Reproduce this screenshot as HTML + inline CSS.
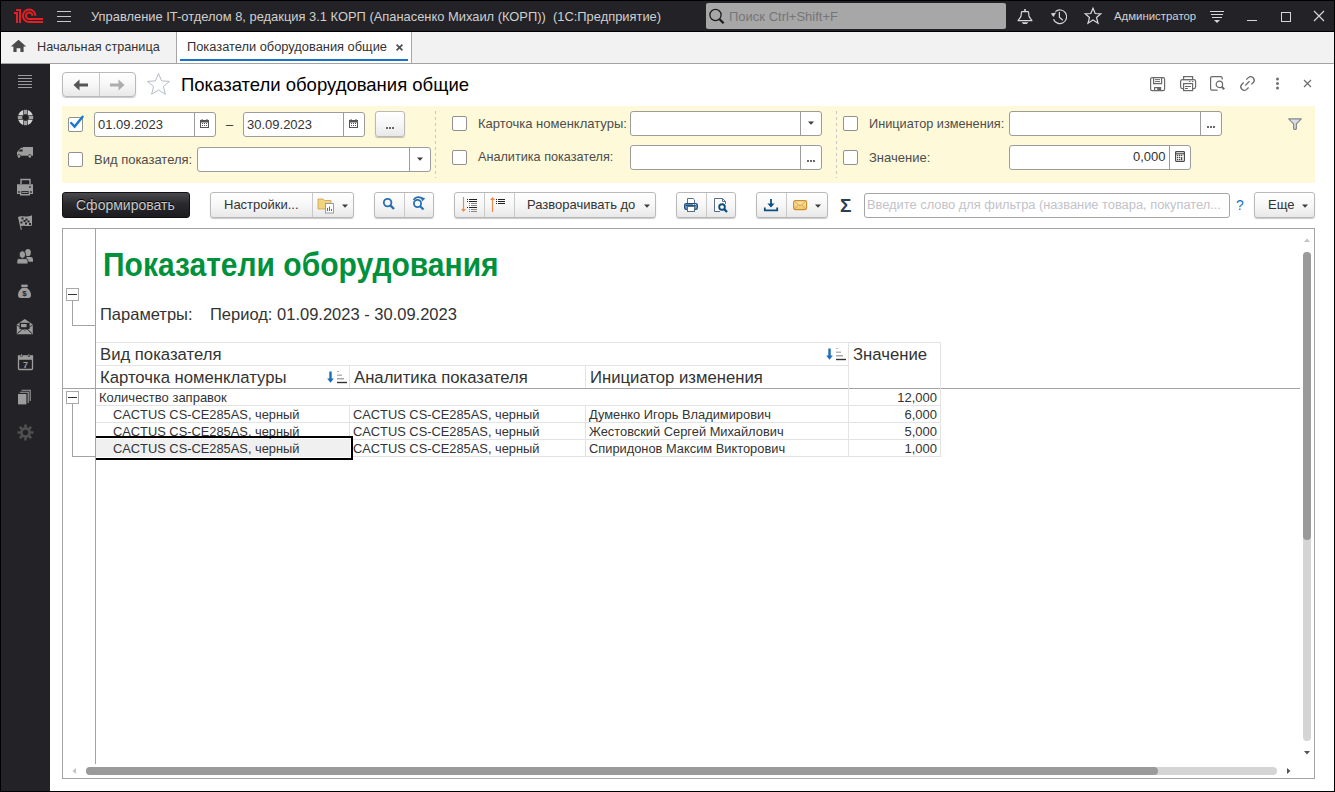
<!DOCTYPE html>
<html><head><meta charset="utf-8">
<style>
*{margin:0;padding:0;box-sizing:border-box}
html,body{width:1335px;height:792px;overflow:hidden;background:#000}
body{position:relative;font-family:"Liberation Sans",sans-serif;font-size:13px;color:#333}
.a{position:absolute}
.t{position:absolute;white-space:nowrap;line-height:1}
svg{position:absolute;overflow:visible}
.btn{position:absolute;border:1px solid #b9b9b9;border-radius:3px;background:linear-gradient(#fff,#f6f6f6 55%,#e8e8e8);box-shadow:0 1px 1px rgba(0,0,0,.22)}
.sep{position:absolute;top:0;bottom:0;width:1px;background:#c9c9c9}
.inp{position:absolute;background:#fff;border:1px solid #9c9c9c;border-radius:3px}
.isep{position:absolute;top:0;bottom:0;width:1px;background:#9c9c9c}
.cb{position:absolute;width:15px;height:15px;background:#fff;border:1px solid #919191;border-radius:2px}
.lbl{position:absolute;white-space:nowrap;line-height:1;color:#4d4d4d;font-size:13px}
.hl{position:absolute;height:1px;background:#e3e3e3}
.vl{position:absolute;width:1px;background:#e3e3e3}
</style></head><body>
<!-- ===== TOP BAR ===== -->
<div class="a" style="left:1px;top:1px;width:1333px;height:30px;background:#232327"></div>
<!-- 1C logo -->
<svg style="left:0;top:0" width="50" height="30" viewBox="0 0 50 30">
 <g fill="#e41f25"><rect x="14" y="12" width="4" height="2"/><rect x="16" y="12" width="2" height="11"/><rect x="16" y="9" width="5" height="2"/><rect x="19" y="9" width="2" height="14"/></g>
 <g fill="none" stroke="#e41f25" stroke-width="2">
  <path d="M35.4 15.8 A6.2 6.2 0 1 0 29.2 22 H43"/>
  <path d="M32.4 15.8 A3.2 3.2 0 1 0 29.2 19 H43"/>
 </g>
</svg>
<!-- hamburger -->
<div class="a" style="left:57px;top:11px;width:14px;height:1px;background:#c9c9c9"></div>
<div class="a" style="left:57px;top:16px;width:14px;height:1px;background:#c9c9c9"></div>
<div class="a" style="left:57px;top:21px;width:14px;height:1px;background:#c9c9c9"></div>
<div class="t" style="left:91px;top:11px;font-size:12.9px;color:#cfcfcf">Управление IT-отделом 8, редакция 3.1 КОРП (Апанасенко Михаил (КОРП))&nbsp; (1С:Предприятие)</div>
<!-- search -->
<div class="a" style="left:706px;top:3px;width:300px;height:26px;background:#a7a7a7;border-radius:2px"></div>
<svg style="left:706px;top:3px" width="30" height="26">
 <circle cx="9.5" cy="12" r="5.6" fill="none" stroke="#1c1c1c" stroke-width="1.3"/>
 <path d="M13.6 16.2 L17.6 20.2" stroke="#1c1c1c" stroke-width="2.2"/>
</svg>
<div class="t" style="left:729px;top:10px;font-size:13px;color:#767676">Поиск Ctrl+Shift+F</div>
<!-- bell -->
<svg style="left:1016px;top:7px" width="18" height="19" viewBox="0 0 18 19" fill="none" stroke="#d6d6d6" stroke-width="1.2">
 <circle cx="9" cy="3" r="1.1" fill="#d6d6d6" stroke="none"/>
 <path d="M5.8 4.6 H12.2 C12.9 5.6 12.7 7.6 13 9 C13.4 10.6 14.8 12 15.8 13.2 V13.7 H2.2 V13.2 C3.2 12 4.6 10.6 5 9 C5.3 7.6 5.1 5.6 5.8 4.6Z"/>
 <path d="M5.6 15.2 H12.4 L10.8 17 H7.2Z" fill="#d6d6d6" stroke="none"/>
</svg>
<!-- history -->
<svg style="left:1050px;top:7px" width="19" height="19" viewBox="0 0 19 19" fill="none" stroke="#d6d6d6" stroke-width="1.2">
 <path d="M5.4 4.6 A6.8 6.8 0 1 1 3.5 12.2"/>
 <path d="M0.8 6.4 L6.2 5.4 L3.4 10Z" fill="#d6d6d6" stroke="none"/>
 <path d="M9.4 5 V10.2 L12.8 13.2"/>
</svg>
<!-- star -->
<svg style="left:1084px;top:7px" width="18" height="18" viewBox="0 0 18 18" fill="none" stroke="#dcdcdc" stroke-width="1.2">
 <path d="M9 1.2 L11.2 6.5 L16.8 6.8 L12.5 10.5 L14 16.2 L9 13 L4 16.2 L5.5 10.5 L1.2 6.8 L6.8 6.5Z"/>
</svg>
<div class="t" style="left:1114px;top:11px;font-size:11.4px;color:#d2d2d2">Администратор</div>
<!-- menu icon -->
<div class="a" style="left:1210px;top:11px;width:14px;height:1px;background:#d6d6d6"></div>
<div class="a" style="left:1211px;top:14px;width:12px;height:1px;background:#d6d6d6"></div>
<div class="a" style="left:1212px;top:17px;width:10px;height:1px;background:#d6d6d6"></div>
<svg style="left:1210px;top:19px" width="14" height="6"><path d="M4 1 H10 L7 4Z" fill="#d6d6d6"/></svg>
<!-- window controls -->
<div class="a" style="left:1247px;top:20px;width:10px;height:1px;background:#d6d6d6"></div>
<div class="a" style="left:1281px;top:12px;width:10px;height:10px;border:1px solid #d6d6d6"></div>
<svg style="left:1313px;top:10px" width="12" height="12" viewBox="0 0 12 12"><path d="M1 1 L11 11 M11 1 L1 11" stroke="#d6d6d6" stroke-width="1.2"/></svg>

<!-- ===== TAB BAR ===== -->
<div class="a" style="left:1px;top:32px;width:1333px;height:31px;background:#f2f2f2"></div>
<div class="a" style="left:1px;top:63px;width:1333px;height:1px;background:#a3a3a3"></div>
<svg style="left:10px;top:39px" width="17" height="14" viewBox="0 0 17 14">
 <path d="M8.5 0.8 L16.2 7.6 H13.6 V13 H10.4 V9.2 H6.6 V13 H3.4 V7.6 H0.8Z" fill="#4a4a4a"/>
</svg>
<div class="t" style="left:37px;top:41px;font-size:12.7px;color:#333">Начальная страница</div>
<div class="a" style="left:176px;top:32px;width:1px;height:31px;background:#a6a6a6"></div>
<div class="a" style="left:177px;top:32px;width:234px;height:31px;background:#fff"></div>
<div class="a" style="left:411px;top:32px;width:1px;height:31px;background:#a6a6a6"></div>
<div class="t" style="left:187px;top:41px;font-size:12.85px;color:#333">Показатели оборудования общие</div>
<svg style="left:395px;top:43px" width="9" height="9" viewBox="0 0 9 9"><path d="M1.6 1.6 L7.4 7.4 M7.4 1.6 L1.6 7.4" stroke="#505050" stroke-width="1.7"/></svg>
<div class="a" style="left:180px;top:59px;width:228px;height:2px;background:#1a73c8"></div>

<!-- ===== SIDEBAR ===== -->
<div class="a" style="left:1px;top:64px;width:49px;height:727px;background:#232327"></div>
<div class="a" style="left:50px;top:64px;width:1284px;height:727px;background:#fff"></div>



<!-- sidebar icons -->
<svg style="left:18px;top:75px" width="14" height="13" viewBox="0 0 14 13"><path d="M0 .5h14M0 3.5h14M0 6.5h14M0 9.5h14M0 12.5h14" stroke="#9c9c9c" stroke-width="1"/></svg>
<svg style="left:17px;top:109px" width="18" height="18" viewBox="0 0 18 18">
 <circle cx="8.5" cy="8.5" r="5.2" fill="none" stroke="#d2d2d2" stroke-width="5"/>
 <g fill="#232327"><rect x="6.3" y="0" width="4.4" height="6"/><rect x="6.3" y="11" width="4.4" height="7"/><rect x="0" y="6.3" width="6" height="4.4"/><rect x="11" y="6.3" width="7" height="4.4"/></g>
 <g fill="#a2a2a2"><rect x="7" y="0.8" width="3" height="4.6"/><rect x="7" y="11.6" width="3" height="4.6"/><rect x="0.8" y="7" width="4.6" height="3"/><rect x="11.6" y="7" width="4.6" height="3"/></g>
 <circle cx="8.5" cy="8.5" r="2.9" fill="#232327"/>
</svg>
<svg style="left:16px;top:146px" width="18" height="13" viewBox="0 0 18 13">
 <path d="M1 6.2 L5 1.8 H7 V1 H17 V9.8 H15.4 A1.6 1.6 0 0 0 12.2 9.8 H4.6 A1.6 1.6 0 0 0 1.4 9.8 H1Z" fill="#9c9c9c"/>
 <path d="M4.2 3.6 H6.6 V5.4 H2.6Z" fill="#232327"/>
 <circle cx="3" cy="10.4" r="1.3" fill="#9c9c9c"/><circle cx="13.8" cy="10.4" r="1.3" fill="#9c9c9c"/>
</svg>
<svg style="left:17px;top:179px" width="17" height="17" viewBox="0 0 17 17">
 <path d="M4 5 V0.5 H13 V5" fill="none" stroke="#9c9c9c" stroke-width="1.4"/>
 <path d="M0 5.2 H16 V15 H13 V12 H3 V15 H0Z" fill="#9c9c9c"/>
 <rect x="12.2" y="7.2" width="1.6" height="1.6" fill="#232327"/><rect x="1.2" y="12.2" width="1.6" height="1.6" fill="#232327"/><rect x="13.2" y="12.2" width="1.6" height="1.6" fill="#232327"/>
 <path d="M3.7 11.5 V15.7 H12.3 V11.5" fill="none" stroke="#9c9c9c" stroke-width="1.4"/><path d="M5.2 13.4 H10.8" stroke="#9c9c9c" stroke-width="1"/>
</svg>
<svg style="left:17px;top:214px" width="17" height="17" viewBox="0 0 17 17">
 <path d="M1 3 C4 1 8 4 15 1.2 V11.5 C10 13 6 10.5 3.8 12.4 L5 15.6 L3.8 15.8 Z" fill="#9c9c9c"/>
 <path d="M4.5 3.5h2v2h-2z M8.5 4.5h2v2h-2z M6.5 6h2v2h-2z M10.5 6.5h2v2h-2z M3.5 7.5h2v2h-2z M8 8.5h2v2h-2z M12 9h2v2h-2z" fill="#232327"/>
</svg>
<svg style="left:16px;top:248px" width="18" height="17" viewBox="0 0 18 17">
 <ellipse cx="12" cy="4.6" rx="2.9" ry="3.7" fill="#9c9c9c"/>
 <path d="M10.4 9 H15 Q17 9.4 17 11.4 V13.8 H10.4Z" fill="#9c9c9c"/>
 <path d="M2.6 10.6 Q0.9 11 0.9 12.8 V16 H12 V12.8 Q12 11 10.2 10.6Z" fill="#9c9c9c" stroke="#232327" stroke-width="0.9"/>
 <ellipse cx="6.4" cy="6.6" rx="3.2" ry="3.8" fill="#9c9c9c" stroke="#232327" stroke-width="0.9"/>
</svg>
<svg style="left:18px;top:284px" width="14" height="15" viewBox="0 0 14 15">
 <rect x="3.3" y="0.6" width="6.4" height="2.4" fill="#9c9c9c"/>
 <path d="M4.2 3.8 H8.8 C11 5.5 13 8 13 11 C13 13.2 12 14 10.5 14 H2.5 C1 14 0 13.2 0 11 C0 8 2 5.5 4.2 3.8Z" fill="#9c9c9c"/>
 <text x="6.5" y="12" font-family="Liberation Sans" font-weight="bold" font-size="8" fill="#232327" text-anchor="middle">$</text>
</svg>
<svg style="left:16px;top:318px" width="18" height="18" viewBox="0 0 18 18">
 <path d="M0.8 6.5 L8.8 1 L16.8 6.5 V16.2 H0.8Z" fill="#9c9c9c"/>
 <rect x="3.6" y="4.8" width="10" height="6.2" fill="#232327"/>
 <rect x="5" y="6" width="5.6" height="3.2" fill="#9c9c9c"/>
 <path d="M1.5 15.5 L7 10.5 M16 15.5 L10.5 10.5" stroke="#232327" stroke-width="1"/>
 <path d="M1 7 L8.8 12.2 L16.6 7" fill="none" stroke="#232327" stroke-width="0.8"/>
</svg>
<svg style="left:17px;top:354px" width="17" height="17" viewBox="0 0 17 17">
 <path d="M1.5 1.8 H15.5 V14.5 A1 1 0 0 1 14.5 15.5 H2.5 A1 1 0 0 1 1.5 14.5Z" fill="none" stroke="#9c9c9c" stroke-width="1.3"/>
 <rect x="1.5" y="1.8" width="14" height="4" fill="#9c9c9c"/>
 <path d="M4.5 0 V3 M11.8 0 V3" stroke="#232327" stroke-width="1.8"/><path d="M4.5 0.2 V2.6 M11.8 0.2 V2.6" stroke="#9c9c9c" stroke-width="0.9"/>
 <text x="8.4" y="13.6" font-family="Liberation Sans" font-weight="bold" font-size="9" fill="#9c9c9c" text-anchor="middle">7</text>
</svg>
<svg style="left:18px;top:389px" width="14" height="16" viewBox="0 0 14 16">
 <path d="M3.6 1.2 H12.2 V12" fill="none" stroke="#9c9c9c" stroke-width="1.1"/>
 <path d="M1.8 3.2 H10.2 V14" fill="none" stroke="#9c9c9c" stroke-width="1.1"/>
 <rect x="0" y="5" width="8.4" height="10.4" fill="#9c9c9c"/>
</svg>
<svg style="left:17px;top:424px" width="17" height="17" viewBox="0 0 17 17">
 <g fill="#505050">
 <circle cx="8.5" cy="8.5" r="5.4"/>
 <path d="M7.2 0.5h2.6v3h-2.6z M7.2 13.5h2.6v3h-2.6z M0.5 7.2v2.6h3v-2.6z M13.5 7.2v2.6h3v-2.6z"/>
 <path d="M7.2 0.5h2.6v3h-2.6z M7.2 13.5h2.6v3h-2.6z M0.5 7.2v2.6h3v-2.6z M13.5 7.2v2.6h3v-2.6z" transform="rotate(45 8.5 8.5)"/>
 </g>
 <circle cx="8.5" cy="8.5" r="2.8" fill="#232327"/>
</svg>

<!-- ===== FORM HEADER ===== -->
<div class="btn" style="left:62px;top:72px;width:74px;height:25px;border-radius:4px"><div class="sep" style="left:36px"></div></div>
<svg style="left:72px;top:78px" width="18" height="14" viewBox="0 0 18 14"><path d="M1.5 7 L7.5 1.5 V5.5 H16 V8.5 H7.5 V12.5Z" fill="#555"/></svg>
<svg style="left:108px;top:78px" width="18" height="14" viewBox="0 0 18 14"><path d="M16.5 7 L10.5 1.5 V5.5 H2 V8.5 H10.5 V12.5Z" fill="#adadad"/></svg>
<svg style="left:146px;top:72px" width="26" height="24" viewBox="0 0 26 24"><path d="M12.5 1.5 L15.6 8.9 L23.5 9.4 L17.4 14.5 L19.4 22.3 L12.5 18 L5.6 22.3 L7.6 14.5 L1.5 9.4 L9.4 8.9Z" fill="none" stroke="#b4bcc4" stroke-width="1"/></svg>
<div class="t" style="left:181px;top:75.5px;font-size:18.5px;color:#000">Показатели оборудования общие</div>
<!-- right icons -->
<svg style="left:1150px;top:77px" width="16" height="15" viewBox="0 0 16 15" fill="none" stroke="#6a6a6a" stroke-width="1.2">
 <rect x="0.6" y="0.6" width="14" height="13" rx="1.6"/><path d="M3.6 0.6 V6.6 H11.6 V0.6"/><path d="M5 2.6 H10 M5 4.6 H10" stroke-width="1"/><path d="M4.6 13.6 V10.6 H10.6 V13.6"/><rect x="7.2" y="11" width="3" height="2.4" fill="#6a6a6a" stroke="none"/>
</svg>
<svg style="left:1180px;top:76px" width="17" height="16" viewBox="0 0 17 16" fill="none" stroke="#6a6a6a" stroke-width="1.2">
 <rect x="3.6" y="0.6" width="9" height="3"/><path d="M3.6 12.6 H2.4 Q0.6 12.6 0.6 10.8 V5.4 Q0.6 3.6 2.4 3.6 H13.8 Q15.6 3.6 15.6 5.4 V10.8 Q15.6 12.6 13.8 12.6 H12.6"/><rect x="3.6" y="7.6" width="9" height="7" fill="#fff"/><path d="M5 10.5 H11 M5 12.5 H8 M9 5.6 H10.5 M12 5.6 H13.5" stroke-width="1"/>
</svg>
<svg style="left:1210px;top:76px" width="16" height="16" viewBox="0 0 16 16" fill="none" stroke="#6a6a6a" stroke-width="1.2">
 <path d="M12.2 3.6 V1.9 Q12.2 0.6 10.9 0.6 H1.9 Q0.6 0.6 0.6 1.9 V12.8 Q0.6 14.1 1.9 14.1 H7.6"/><circle cx="9.4" cy="8.4" r="3.2"/><path d="M11.8 10.8 L14.2 13.2" stroke-width="2"/>
</svg>
<svg style="left:1239px;top:75px" width="17" height="17" viewBox="0 0 17 17" fill="none" stroke="#6a6a6a" stroke-width="1.3">
 <path d="M7.3 4.6 L9.33 2.63 A3.5 3.5 0 0 1 14.27 7.57 L12.4 9.4"/><path d="M4.63 7.53 L2.73 9.43 A3.5 3.5 0 0 0 7.67 14.37 L9.57 12.47"/><path d="M6.2 10.6 L10.5 6.3"/>
</svg>
<svg style="left:1275px;top:77px" width="5" height="13"><circle cx="2.5" cy="2" r="1.5" fill="#6e6e6e"/><circle cx="2.5" cy="6.5" r="1.5" fill="#6e6e6e"/><circle cx="2.5" cy="11" r="1.5" fill="#6e6e6e"/></svg>
<svg style="left:1303px;top:79px" width="9" height="9" viewBox="0 0 9 9"><path d="M1 1 L8 8 M8 1 L1 8" stroke="#6e6e6e" stroke-width="1.2"/></svg>

<!-- ===== FILTER PANEL ===== -->
<div class="a" style="left:62px;top:106px;width:1253px;height:77px;background:#fef9d8"></div>
<div class="cb" style="left:68px;top:117px"></div>
<svg style="left:68px;top:113px" width="18" height="18" viewBox="0 0 18 18"><path d="M3.2 10 L6.6 13.6 L14.6 3.8" fill="none" stroke="#1a76cf" stroke-width="2.4" stroke-linecap="round"/></svg>
<div class="inp" style="left:94px;top:112px;width:122px;height:25px"><div class="isep" style="left:99px"></div></div>
<div class="t" style="left:98px;top:118px;font-size:13px;color:#333">01.09.2023</div>
<svg style="left:199px;top:118px" width="12" height="12" viewBox="0 0 12 12"><rect x="1" y="2" width="9" height="8" fill="#555"/><rect x="2" y="4.5" width="7" height="4.5" fill="#fff"/><path d="M3 1v2 M8 1v2" stroke="#555"/><path d="M3 5.5h1 M5 5.5h1 M7 5.5h1 M3 7.5h1 M5 7.5h1 M7 7.5h1" stroke="#555"/></svg>
<div class="t" style="left:226px;top:118px;font-size:13px;color:#333">–</div>
<div class="inp" style="left:243px;top:112px;width:122px;height:25px"><div class="isep" style="left:99px"></div></div>
<div class="t" style="left:247px;top:118px;font-size:13px;color:#333">30.09.2023</div>
<svg style="left:348px;top:118px" width="12" height="12" viewBox="0 0 12 12"><rect x="1" y="2" width="9" height="8" fill="#555"/><rect x="2" y="4.5" width="7" height="4.5" fill="#fff"/><path d="M3 1v2 M8 1v2" stroke="#555"/><path d="M3 5.5h1 M5 5.5h1 M7 5.5h1 M3 7.5h1 M5 7.5h1 M7 7.5h1" stroke="#555"/></svg>
<div class="btn" style="left:375px;top:111px;width:30px;height:26px"></div>
<svg style="left:384px;top:126px" width="10" height="4"><rect x="2" y="1" width="2" height="2" fill="#6a6a6a"/><rect x="5" y="1" width="2" height="2" fill="#6a6a6a"/><rect x="8" y="1" width="2" height="2" fill="#6a6a6a"/></svg>
<div class="cb" style="left:68px;top:152px"></div>
<div class="lbl" style="left:94px;top:153px">Вид показателя:</div>
<div class="inp" style="left:197px;top:147px;width:234px;height:25px"><div class="isep" style="left:211px"></div></div>
<svg style="left:416px;top:157px" width="8" height="5"><path d="M1 0.6 H7 L4 3.8Z" fill="#3c3c3c"/></svg>
<div class="a" style="left:435px;top:111px;width:1px;height:67px;background:repeating-linear-gradient(#c8c8c8 0 3px,transparent 3px 6px)"></div>

<div class="cb" style="left:452px;top:116px"></div>
<div class="lbl" style="left:478px;top:117px">Карточка номенклатуры:</div>
<div class="inp" style="left:630px;top:111px;width:192px;height:25px"><div class="isep" style="left:169px"></div></div>
<svg style="left:807px;top:121px" width="8" height="5"><path d="M1 0.6 H7 L4 3.8Z" fill="#3c3c3c"/></svg>
<div class="cb" style="left:452px;top:150px"></div>
<div class="lbl" style="left:478px;top:151px;font-size:12.66px">Аналитика показателя:</div>
<div class="inp" style="left:630px;top:145px;width:192px;height:25px"><div class="isep" style="left:169px"></div></div>
<svg style="left:805px;top:159px" width="10" height="4"><rect x="2" y="1" width="2" height="2" fill="#6a6a6a"/><rect x="5" y="1" width="2" height="2" fill="#6a6a6a"/><rect x="8" y="1" width="2" height="2" fill="#6a6a6a"/></svg>
<div class="a" style="left:836px;top:111px;width:1px;height:67px;background:repeating-linear-gradient(#c8c8c8 0 3px,transparent 3px 6px)"></div>

<div class="cb" style="left:843px;top:116px"></div>
<div class="lbl" style="left:869px;top:118px;font-size:12.72px">Инициатор изменения:</div>
<div class="inp" style="left:1009px;top:111px;width:213px;height:25px"><div class="isep" style="left:190px"></div></div>
<svg style="left:1205px;top:125px" width="10" height="4"><rect x="2" y="1" width="2" height="2" fill="#6a6a6a"/><rect x="5" y="1" width="2" height="2" fill="#6a6a6a"/><rect x="8" y="1" width="2" height="2" fill="#6a6a6a"/></svg>
<div class="cb" style="left:843px;top:150px"></div>
<div class="lbl" style="left:869px;top:151px">Значение:</div>
<div class="inp" style="left:1009px;top:145px;width:182px;height:25px"><div class="isep" style="left:159px"></div></div>
<div class="t" style="left:1133px;top:150px;font-size:13px;color:#333">0,000</div>
<svg style="left:1175px;top:151px" width="10" height="11" viewBox="0 0 10 11"><rect x="0.6" y="0.6" width="8.8" height="9.8" rx="0.8" fill="none" stroke="#4a4a4a" stroke-width="1.2"/><path d="M0.6 2.8 H9.4" stroke="#4a4a4a" stroke-width="1.2"/><g fill="#4a4a4a"><circle cx="2.6" cy="4.6" r=".75"/><circle cx="4.6" cy="4.6" r=".75"/><circle cx="6.6" cy="4.6" r=".75"/><circle cx="2.6" cy="6.6" r=".75"/><circle cx="4.6" cy="6.6" r=".75"/><circle cx="2.6" cy="8.6" r=".75"/><circle cx="4.6" cy="8.6" r=".75"/><rect x="5.9" y="5.9" width="1.4" height="3.4" rx=".6"/></g></svg>
<svg style="left:1288px;top:118px" width="14" height="12" viewBox="0 0 14 12"><defs><linearGradient id="fg" x1="0" y1="0" x2="1" y2="1"><stop offset="0" stop-color="#e6e9ee"/><stop offset="1" stop-color="#c4cad2"/></linearGradient></defs><path d="M0.7 0.9 H13.3 L8.4 5.8 V10.6 Q8.4 11.4 7.6 11.4 H6.4 Q5.6 11.4 5.6 10.6 V5.8Z" fill="url(#fg)" stroke="#7d868d" stroke-width="1.1" stroke-linejoin="round"/></svg>

<!-- ===== TOOLBAR ===== -->
<div class="a" style="left:62px;top:192px;width:128px;height:26px;border-radius:3px;background:linear-gradient(#4a4a4e,#2a2a2e 45%,#1c1c20);border:1px solid #111"></div>
<div class="t" style="left:76px;top:198px;font-size:14px;color:#c8c8c8;text-shadow:0 -1px 0 #000">Сформировать</div>

<div class="btn" style="left:210px;top:192px;width:144px;height:26px"><div class="sep" style="left:101px"></div></div>
<div class="t" style="left:224px;top:198px;font-size:13px;color:#333">Настройки...</div>
<svg style="left:317px;top:196px" width="20" height="18" viewBox="0 0 20 18">
 <path d="M1 3 H6 L7.5 4.5 H14 V13 H1Z" fill="#f2d37e" stroke="#c8a24a" stroke-width=".8"/>
 <rect x="8.5" y="7.5" width="8" height="9.5" fill="#fff" stroke="#8a96a4" stroke-width=".9"/>
 <path d="M10.5 15 v-3 M12.5 15 v-4.5 M14.5 15 v-2" stroke="#d34" stroke-width="1"/>
</svg>
<svg style="left:341px;top:204px" width="8" height="5"><path d="M1 0.6 H7 L4 3.8Z" fill="#3c3c3c"/></svg>

<div class="btn" style="left:374px;top:192px;width:60px;height:26px"><div class="sep" style="left:29px"></div></div>
<svg style="left:382px;top:197px" width="14" height="14" viewBox="0 0 14 14"><circle cx="5.6" cy="5.6" r="3.8" fill="none" stroke="#2a6fb0" stroke-width="1.8"/><path d="M8.4 8.4 L12 12" stroke="#2a6fb0" stroke-width="2.4"/></svg>
<svg style="left:411px;top:196px" width="16" height="15" viewBox="0 0 16 15"><circle cx="6.5" cy="7.5" r="3.6" fill="none" stroke="#2a6fb0" stroke-width="1.8"/><path d="M9.2 10.2 L12.5 13.5" stroke="#2a6fb0" stroke-width="2.2"/><path d="M2.5 4 A5.5 5.5 0 0 1 11.5 3" fill="none" stroke="#2a6fb0" stroke-width="1.6"/><path d="M10 0.8 L14.2 2.6 L11 5.6Z" fill="#2a6fb0"/></svg>

<div class="btn" style="left:454px;top:192px;width:202px;height:26px"><div class="sep" style="left:29px"></div><div class="sep" style="left:59px"></div></div>
<svg style="left:450px;top:190px" width="60" height="30" viewBox="0 0 60 30">
 <path d="M13.5 7 V19.5" stroke="#f08a4b" stroke-width="1.2"/><path d="M11 19 H16 L13.5 22Z" fill="#f08a4b"/>
 <g stroke-width="1">
 <path d="M19 9.5h8 M19 11.5h8 M19 17.5h8" stroke="#222"/>
 <path d="M17 9.5h1 M17 11.5h1 M17 17.5h1" stroke="#222"/>
 <path d="M21 13.5h6 M21 15.5h6 M21 19.5h6 M21 21.5h6 M19 13.5h1 M19 15.5h1 M19 19.5h1 M19 21.5h1" stroke="#888"/>
 </g>
 <path d="M42.5 9.5 V22" stroke="#f08a4b" stroke-width="1.2"/><path d="M40 10 H45 L42.5 7Z" fill="#f08a4b"/>
 <path d="M48 9.5h7 M48 11.5h7 M48 13.5h7 M46 9.5h1 M46 11.5h1 M46 13.5h1" stroke="#222" stroke-width="1"/>
</svg>
<div class="t" style="left:527px;top:198px;font-size:13px;color:#333">Разворачивать до</div>
<svg style="left:643px;top:204px" width="8" height="5"><path d="M1 0.6 H7 L4 3.8Z" fill="#3c3c3c"/></svg>

<div class="btn" style="left:676px;top:192px;width:60px;height:26px"><div class="sep" style="left:29px"></div></div>
<svg style="left:683px;top:197px" width="16" height="16" viewBox="0 0 16 16">
 <path d="M4.5 6.5 V1.5 H10.2 L11.5 2.8 V6.5" fill="#fff" stroke="#5a6f84" stroke-width="1"/>
 <rect x="1.6" y="6.6" width="12.8" height="5.8" rx="1.6" fill="#6f9dcc" stroke="#1e4d7b" stroke-width="1.2"/>
 <path d="M3 8.5 H13" stroke="#1e4d7b" stroke-width="1"/>
 <circle cx="10.4" cy="7.6" r=".6" fill="#fff"/><circle cx="12.4" cy="7.6" r=".6" fill="#fff"/>
 <rect x="4.5" y="9.5" width="7" height="5" fill="#fff" stroke="#5a6f84" stroke-width="1"/>
</svg>
<svg style="left:713px;top:197px" width="17" height="17" viewBox="0 0 17 17">
 <path d="M7 14.5 H1.5 V1.5 H9.5 L12.5 4.5 V7" fill="#fbfbfb" stroke="#5a6f84" stroke-width="1"/>
 <path d="M9.5 1.5 V4.5 H12.5" fill="none" stroke="#5a6f84" stroke-width="1"/>
 <circle cx="9" cy="10" r="2.8" fill="#fff" stroke="#0b4f80" stroke-width="1.9"/>
 <path d="M11 12 L14 15" stroke="#0b4f80" stroke-width="2.4"/>
</svg>

<div class="btn" style="left:756px;top:192px;width:72px;height:26px"><div class="sep" style="left:29px"></div></div>
<svg style="left:763px;top:198px" width="16" height="15" viewBox="0 0 16 15"><path d="M8 1 V8.5" stroke="#0d4f82" stroke-width="1.8"/><path d="M4.4 5.6 H11.6 L8 9.6Z" fill="#0d4f82"/><path d="M1.8 9.4 V12.4 H14.2 V9.4" fill="none" stroke="#0d4f82" stroke-width="1.8"/></svg>
<svg style="left:793px;top:200px" width="15" height="11" viewBox="0 0 15 11"><defs><linearGradient id="eg" x1="0" y1="0" x2="0" y2="1"><stop offset="0" stop-color="#fbe7b0"/><stop offset="1" stop-color="#f1c46a"/></linearGradient></defs><rect x="0.6" y="0.6" width="13" height="9" rx="1.6" fill="url(#eg)" stroke="#c98f2c" stroke-width="1.1"/><path d="M1.5 1.5 L7.1 6 L12.7 1.5 M1.6 9 L5.4 5 M12.6 9 L8.8 5" fill="none" stroke="#d6a246" stroke-width=".9"/></svg>
<svg style="left:814px;top:204px" width="8" height="5"><path d="M1 0.6 H7 L4 3.8Z" fill="#3c3c3c"/></svg>

<div class="t" style="left:840px;top:196px;font-size:19px;font-weight:bold;color:#2b3e50">Σ</div>
<div class="inp" style="left:864px;top:193px;width:366px;height:25px;border-color:#a5a5a5"></div>
<div class="t" style="left:867px;top:199px;font-size:12.85px;color:#c2c2ca">Введите слово для фильтра (название товара, покупател...</div>
<div class="t" style="left:1236px;top:198px;font-size:14px;color:#1a73c0">?</div>
<div class="btn" style="left:1254px;top:192px;width:61px;height:26px"></div>
<div class="t" style="left:1268px;top:198px;font-size:13px;color:#333">Еще</div>
<svg style="left:1301px;top:204px" width="8" height="5"><path d="M1 0.6 H7 L4 3.8Z" fill="#3c3c3c"/></svg>

<!-- ===== REPORT ===== -->
<div class="a" style="left:62px;top:228px;width:1253px;height:551px;border:1px solid #a3a3a3;background:#fff"></div>
<div class="a" style="left:95px;top:229px;width:1px;height:535px;background:#a3a3a3"></div>

<div class="t" style="left:103px;top:249px;font-size:30px;font-weight:bold;color:#00913c;transform:scaleY(1.1);transform-origin:0 5px">Показатели оборудования</div>
<div class="a" style="left:66px;top:288px;width:13px;height:13px;border:1px solid #a8a8a8;background:#fff"></div>
<div class="a" style="left:68px;top:294px;width:9px;height:1px;background:#333"></div>
<div class="a" style="left:72px;top:301px;width:1px;height:25px;background:#a3a3a3"></div>
<div class="a" style="left:72px;top:325px;width:23px;height:1px;background:#a3a3a3"></div>
<div class="t" style="left:100px;top:306px;font-size:16.5px;color:#333">Параметры:</div>
<div class="t" style="left:210px;top:306px;font-size:16.5px;color:#333">Период: 01.09.2023 - 30.09.2023</div>

<div class="hl" style="left:96px;top:342px;width:845px"></div>
<div class="hl" style="left:96px;top:365px;width:752px"></div>
<div class="a" style="left:63px;top:388px;width:1237px;height:1px;background:#a3a3a3"></div>
<div class="vl" style="left:848px;top:342px;height:114px"></div>
<div class="vl" style="left:940px;top:342px;height:114px"></div>
<div class="vl" style="left:349px;top:365px;height:23px"></div>
<div class="vl" style="left:585px;top:365px;height:23px"></div>
<div class="vl" style="left:349px;top:405px;height:51px"></div>
<div class="vl" style="left:585px;top:405px;height:51px"></div>
<div class="t" style="left:100px;top:347px;font-size:16.7px;color:#333">Вид показателя</div>
<svg style="left:826px;top:347px" width="22" height="14" viewBox="0 0 22 14"><path d="M3.5 1.5 V9" stroke="#1a6eb5" stroke-width="2.4"/><path d="M0.2 8.6 H6.8 L3.5 12.8Z" fill="#1a6eb5"/><path d="M10 1.5h2" stroke="#bbb" stroke-width="1"/><path d="M10 5.2h5" stroke="#aaa" stroke-width="1.3"/><path d="M10 8.8h7" stroke="#999" stroke-width="1.3"/><path d="M10 12.5h10" stroke="#333" stroke-width="1.4"/></svg>
<div class="t" style="left:853px;top:347px;font-size:16.7px;color:#333">Значение</div>
<div class="t" style="left:100px;top:370px;font-size:16.7px;color:#333">Карточка номенклатуры</div>
<svg style="left:327px;top:370px" width="22" height="14" viewBox="0 0 22 14"><path d="M3.5 1.5 V9" stroke="#1a6eb5" stroke-width="2.4"/><path d="M0.2 8.6 H6.8 L3.5 12.8Z" fill="#1a6eb5"/><path d="M10 1.5h2" stroke="#bbb" stroke-width="1"/><path d="M10 5.2h5" stroke="#aaa" stroke-width="1.3"/><path d="M10 8.8h7" stroke="#999" stroke-width="1.3"/><path d="M10 12.5h10" stroke="#333" stroke-width="1.4"/></svg>
<div class="t" style="left:354px;top:370px;font-size:16.7px;color:#333">Аналитика показателя</div>
<div class="t" style="left:590px;top:370px;font-size:16.7px;color:#333">Инициатор изменения</div>

<div class="hl" style="left:96px;top:405px;width:845px"></div>
<div class="hl" style="left:96px;top:422px;width:845px"></div>
<div class="hl" style="left:96px;top:439px;width:845px"></div>
<div class="hl" style="left:96px;top:456px;width:845px"></div>
<div class="a" style="left:66px;top:391px;width:13px;height:13px;border:1px solid #a8a8a8;background:#fff"></div>
<div class="a" style="left:68px;top:397px;width:9px;height:1px;background:#333"></div>
<div class="a" style="left:72px;top:404px;width:1px;height:53px;background:#a3a3a3"></div>
<div class="a" style="left:72px;top:456px;width:23px;height:1px;background:#a3a3a3"></div>
<div class="a" style="left:96px;top:439px;width:254px;height:18px;background:#f0f0f0"></div>

<div class="t" style="left:99px;top:391px;font-size:13px;color:#333">Количество заправок</div>
<div class="t" style="left:840px;top:391px;width:97px;text-align:right;font-size:13px;color:#333">12,000</div>
<div class="t" style="left:113px;top:409px;font-size:12.85px;color:#333">CACTUS CS-CE285AS, черный</div>
<div class="t" style="left:353px;top:409px;font-size:12.85px;color:#333">CACTUS CS-CE285AS, черный</div>
<div class="t" style="left:589px;top:409px;font-size:12.85px;color:#333">Думенко Игорь Владимирович</div>
<div class="t" style="left:840px;top:408px;width:97px;text-align:right;font-size:13px;color:#333">6,000</div>
<div class="t" style="left:113px;top:426px;font-size:12.85px;color:#333">CACTUS CS-CE285AS, черный</div>
<div class="t" style="left:353px;top:426px;font-size:12.85px;color:#333">CACTUS CS-CE285AS, черный</div>
<div class="t" style="left:589px;top:426px;font-size:12.85px;color:#333">Жестовский Сергей Михайлович</div>
<div class="t" style="left:840px;top:425px;width:97px;text-align:right;font-size:13px;color:#333">5,000</div>
<div class="a" style="left:96px;top:436px;width:257px;height:24px;border:2px solid #000;border-left:0"></div>
<div class="t" style="left:113px;top:443px;font-size:12.85px;color:#333">CACTUS CS-CE285AS, черный</div>
<div class="t" style="left:353px;top:443px;font-size:12.85px;color:#333">CACTUS CS-CE285AS, черный</div>
<div class="t" style="left:589px;top:443px;font-size:12.85px;color:#333">Спиридонов Максим Викторович</div>
<div class="t" style="left:840px;top:442px;width:97px;text-align:right;font-size:13px;color:#333">1,000</div>

<!-- scrollbars -->
<svg style="left:1303px;top:237px" width="8" height="6"><path d="M1 5 H7 L4 1.5Z" fill="#c4c4c4"/></svg>
<div class="a" style="left:1303px;top:252px;width:8px;height:489px;border-radius:4px;background:#d5d5d5"></div>
<div class="a" style="left:1303px;top:252px;width:8px;height:288px;border-radius:4px;background:#9a9a9a"></div>
<svg style="left:1303px;top:750px" width="8" height="6"><path d="M1 1 H7 L4 4.5Z" fill="#555"/></svg>
<svg style="left:71px;top:767px" width="6" height="8"><path d="M5 1 V7 L1.5 4Z" fill="#c4c4c4"/></svg>
<div class="a" style="left:86px;top:767px;width:1191px;height:8px;border-radius:4px;background:#d5d5d5"></div>
<div class="a" style="left:86px;top:767px;width:1072px;height:8px;border-radius:4px;background:#9a9a9a"></div>
<svg style="left:1286px;top:767px" width="6" height="8"><path d="M1 1 V7 L4.5 4Z" fill="#555"/></svg>
</body></html>
